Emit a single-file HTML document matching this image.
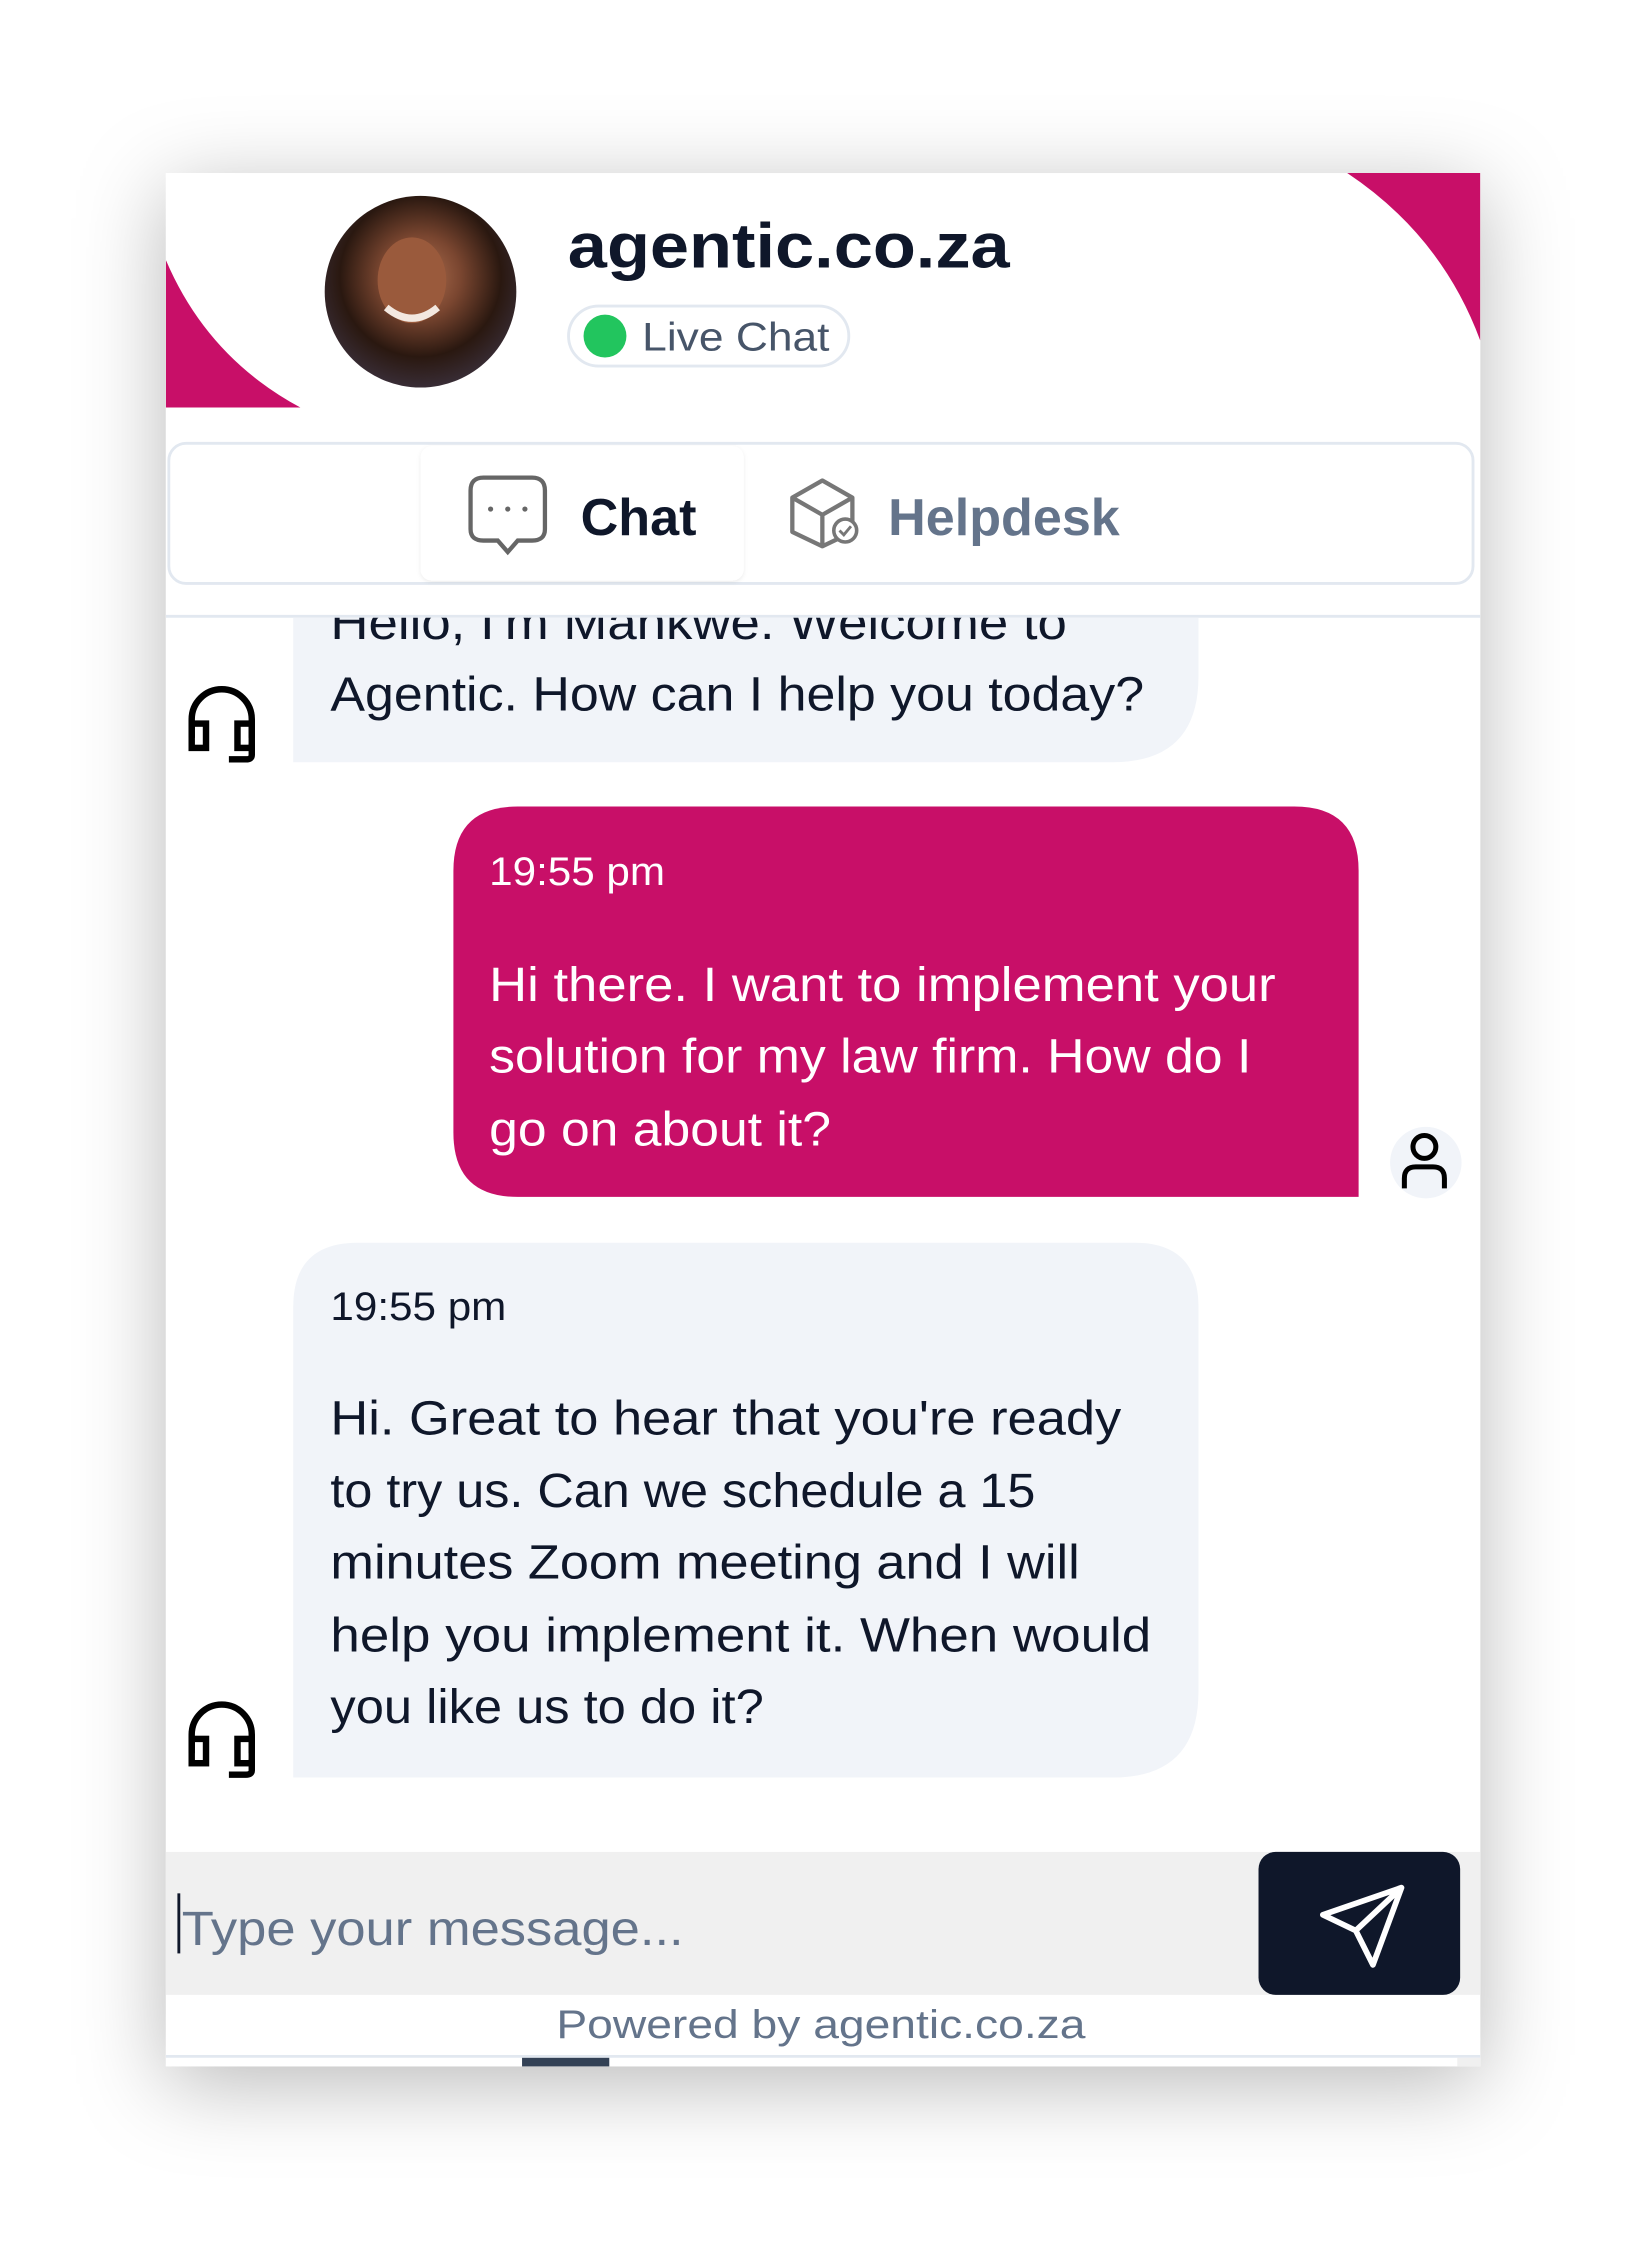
<!DOCTYPE html>
<html><head><meta charset="utf-8">
<style>
html,body{margin:0;padding:0;background:#fff;width:1649px;height:2246px;overflow:hidden}
svg{display:block}
text{font-family:"Liberation Sans",sans-serif}
</style></head>
<body>
<svg width="1649" height="2246" viewBox="0 0 1153 1570.6" xmlns="http://www.w3.org/2000/svg">
<defs>
<filter id="sh" x="-20%" y="-20%" width="140%" height="140%">
<feDropShadow dx="0" dy="12" stdDeviation="30" flood-color="#000" flood-opacity="0.28"/>
</filter>
<filter id="ts" x="-10%" y="-10%" width="120%" height="130%">
<feDropShadow dx="0" dy="1" stdDeviation="1.5" flood-color="#000" flood-opacity="0.08"/>
</filter>
<radialGradient id="av" cx="50%" cy="42%" r="60%">
<stop offset="0" stop-color="#b07050"/>
<stop offset="0.35" stop-color="#7a4630"/>
<stop offset="0.7" stop-color="#2a1810"/>
<stop offset="1" stop-color="#3a2f3a"/>
</radialGradient>
<clipPath id="msgs"><rect x="116" y="432" width="919" height="863"/></clipPath>
</defs>

<!-- card -->
<rect x="116" y="121" width="919" height="1324" fill="#fff" filter="url(#sh)"/>

<!-- header blobs -->
<path d="M116,182 Q145,250 210,285 L116,285 Z" fill="#c80f68"/>
<path d="M942,121 Q1008,165 1035,238 L1035,121 Z" fill="#c80f68"/>

<!-- avatar -->
<ellipse cx="294" cy="204" rx="67" ry="67" fill="url(#av)"/>
<ellipse cx="288" cy="196" rx="24" ry="30" fill="#9a5a3c"/>
<path d="M270,215 Q288,230 306,215" stroke="#f3e8e0" stroke-width="5" fill="none"/>

<text x="397" y="187" font-size="44" font-weight="bold" fill="#0f172a" textLength="309" lengthAdjust="spacingAndGlyphs">agentic.co.za</text>

<rect x="397.5" y="214" width="196" height="42" rx="21" fill="#fff" stroke="#e2e8f0" stroke-width="2"/>
<circle cx="423" cy="235" r="15" fill="#22c55e"/>
<text x="449" y="245" font-size="28" fill="#475569" textLength="131" lengthAdjust="spacingAndGlyphs">Live Chat</text>

<!-- tabs -->
<rect x="118" y="310" width="912" height="98" rx="12" fill="#fff" stroke="#e2e8f0" stroke-width="2"/>
<rect x="294" y="312" width="226" height="94" rx="8" fill="#fff" filter="url(#ts)"/>
<!-- chat icon -->
<path d="M338,334 H372 Q381,334 381,343 V370 Q381,378 372,378 H362 L355,386 L348,378 H338 Q329,378 329,370 V343 Q329,334 338,334 Z" fill="none" stroke="#666" stroke-width="3"/>
<circle cx="343" cy="356" r="1.8" fill="#666"/><circle cx="355" cy="356" r="1.8" fill="#666"/><circle cx="367" cy="356" r="1.8" fill="#666"/>
<text x="406" y="374" font-size="36" font-weight="bold" fill="#0f172a" textLength="81" lengthAdjust="spacingAndGlyphs">Chat</text>
<!-- helpdesk icon -->
<path d="M575,336 L596,348 V372 L575,382 L554,372 V348 Z M554,348 L575,360 L596,348 M575,360 V382" fill="none" stroke="#777" stroke-width="3" stroke-linejoin="round"/>
<circle cx="591" cy="371" r="8" fill="#fff" stroke="#777" stroke-width="2.5"/>
<path d="M587,371 l3,3 l5,-6" fill="none" stroke="#777" stroke-width="2"/>
<text x="621" y="374" font-size="36" font-weight="bold" fill="#64748b" textLength="162" lengthAdjust="spacingAndGlyphs">Helpdesk</text>

<line x1="116" y1="431" x2="1035" y2="431" stroke="#e2e8f0" stroke-width="2"/>

<g clip-path="url(#msgs)">
<!-- bot bubble 1 -->
<path d="M205,380 H838 V473 Q838,533 778,533 H205 Z" fill="#f1f4f9"/>
<text x="231" y="447" font-size="34" fill="#0f172a" textLength="515" lengthAdjust="spacingAndGlyphs">Hello, I'm Mankwe. Welcome to</text>
<text x="231" y="497" font-size="34" fill="#0f172a" textLength="569" lengthAdjust="spacingAndGlyphs">Agentic. How can I help you today?</text>
</g>

<!-- headset 1 -->
<g fill="none" stroke="#000" stroke-width="4.5">
<path d="M134,516 V503 A21,21 0 0 1 176,503 V516"/>
<rect x="134" y="506" width="10" height="17"/>
<rect x="166" y="506" width="10" height="17"/>
<path d="M176,520 V528 Q176,531 172,531 H160"/>
</g>

<!-- user bubble -->
<path d="M362,564 H905 Q950,564 950,609 V837 H362 Q317,837 317,792 V609 Q317,564 362,564 Z" fill="#c80f68"/>
<text x="342" y="619" font-size="28" fill="#fff" textLength="123" lengthAdjust="spacingAndGlyphs">19:55 pm</text>
<text x="342" y="700" font-size="34" fill="#fff" textLength="550" lengthAdjust="spacingAndGlyphs">Hi there. I want to implement your</text>
<text x="342" y="750" font-size="34" fill="#fff" textLength="533" lengthAdjust="spacingAndGlyphs">solution for my law firm. How do I</text>
<text x="342" y="801" font-size="34" fill="#fff" textLength="239" lengthAdjust="spacingAndGlyphs">go on about it?</text>

<!-- user icon -->
<circle cx="997" cy="813" r="25" fill="#f1f4f9"/>
<circle cx="996" cy="802" r="8" fill="none" stroke="#000" stroke-width="3.5"/>
<path d="M982,831 V824 Q982,816 990,816 H1002 Q1010,816 1010,824 V831" fill="none" stroke="#000" stroke-width="3.5"/>

<!-- bot bubble 2 -->
<path d="M250,869 H793 Q838,869 838,914 V1183 Q838,1243 778,1243 H205 V914 Q205,869 250,869 Z" fill="#f1f4f9"/>
<text x="231" y="923" font-size="28" fill="#0f172a" textLength="123" lengthAdjust="spacingAndGlyphs">19:55 pm</text>
<text x="231" y="1003" font-size="34" fill="#0f172a" textLength="553" lengthAdjust="spacingAndGlyphs">Hi. Great to hear that you're ready</text>
<text x="231" y="1054" font-size="34" fill="#0f172a" textLength="493" lengthAdjust="spacingAndGlyphs">to try us. Can we schedule a 15</text>
<text x="231" y="1104" font-size="34" fill="#0f172a" textLength="524" lengthAdjust="spacingAndGlyphs">minutes Zoom meeting and I will</text>
<text x="231" y="1155" font-size="34" fill="#0f172a" textLength="574" lengthAdjust="spacingAndGlyphs">help you implement it. When would</text>
<text x="231" y="1205" font-size="34" fill="#0f172a" textLength="303" lengthAdjust="spacingAndGlyphs">you like us to do it?</text>

<!-- headset 2 -->
<g fill="none" stroke="#000" stroke-width="4.5">
<path d="M134,1226 V1213 A21,21 0 0 1 176,1213 V1226"/>
<rect x="134" y="1216" width="10" height="17"/>
<rect x="166" y="1216" width="10" height="17"/>
<path d="M176,1230 V1238 Q176,1241 172,1241 H160"/>
</g>

<!-- input -->
<rect x="116" y="1295" width="919" height="100" fill="#f0f0f0"/>
<rect x="124" y="1324" width="2" height="42" fill="#0f172a"/>
<text x="127" y="1360" font-size="34" fill="#64748b" textLength="351" lengthAdjust="spacingAndGlyphs">Type your message...</text>
<rect x="880" y="1295" width="141" height="100" rx="12" fill="#0f172a"/>
<path d="M980,1320 L925,1339 L948,1350 L960,1374 Z M980,1320 L948,1350" fill="none" stroke="#fff" stroke-width="4" stroke-linejoin="round"/>

<text x="574" y="1425" font-size="28" fill="#64748b" text-anchor="middle" textLength="370" lengthAdjust="spacingAndGlyphs">Powered by agentic.co.za</text>
<line x1="116" y1="1438" x2="1035" y2="1438" stroke="#e2e8f0" stroke-width="2"/>
<rect x="1019" y="1439" width="16" height="6" fill="#f0f0f0"/>
<rect x="365" y="1439" width="61" height="6" fill="#334155"/>
</svg>
</body></html>
